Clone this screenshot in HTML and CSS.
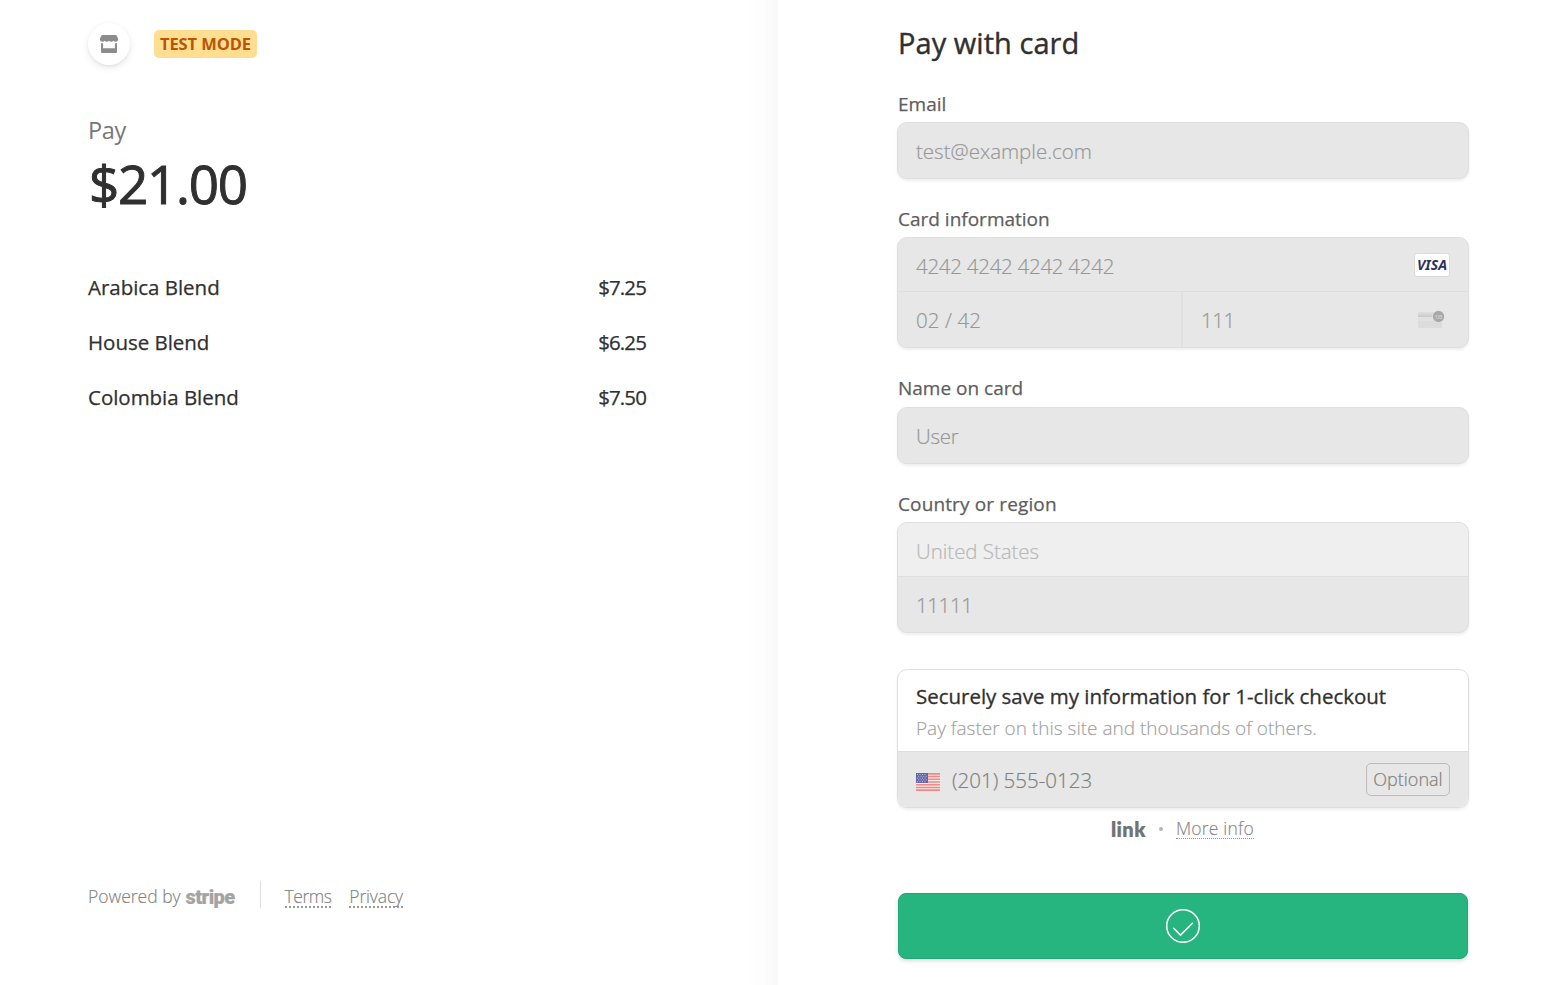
FILE: index.html
```html
<!DOCTYPE html>
<html lang="en">
<head>
<meta charset="utf-8">
<title>Checkout</title>
<link rel="stylesheet" href="styles.css">
</head>
<body>
<div class="checkout">
  <section class="summary">
    <header class="merchant">
      <div class="avatar">
        <svg width="18" height="18" viewBox="0 0 18 18"><path fill="#8c8c8c" d="M2.6 0h12.8c.7 0 1.2.3 1.5.9l.9 2c.2.5.2.8.2 1.3A2.4 2.4 0 0 1 15.500 6.800c-.9 0-1.700-.4-2.150-1.050A2.700 2.700 0 0 1 11.200 6.800 2.700 2.700 0 0 1 9 5.800 2.700 2.700 0 0 1 6.800 6.800a2.700 2.700 0 0 1-2.150-1.050A2.700 2.700 0 0 1 2.500 6.800 2.400 2.400 0 0 1 0 4.200c0-.5 0-.8.2-1.300l.9-2C1.400.3 1.900 0 2.600 0z"/><path fill="#8c8c8c" d="M1 8.200h2.100V13.200h11.800V8.200H17v8.300c0 1-.5 1.500-1.500 1.500h-13C1.500 18 1 17.500 1 16.500z"/></svg>
      </div>
      <span class="badge">TEST MODE</span>
    </header>
    <div class="pay">Pay</div>
    <div class="amount">$21.00</div>
    <ul class="items">
      <li><span>Arabica Blend</span><span class="price">$7.25</span></li>
      <li><span>House Blend</span><span class="price">$6.25</span></li>
      <li><span>Colombia Blend</span><span class="price">$7.50</span></li>
    </ul>
    <footer class="footer">
      <span class="powered">Powered by</span><span class="stripe">stripe</span>
      <span class="rule"></span>
      <a class="terms">Terms</a><a class="privacy">Privacy</a>
    </footer>
  </section>
  <main class="payment">
    <h1 class="title">Pay with card</h1>
    <label class="label l-email">Email</label>
    <div class="group"><div class="row">test@example.com</div></div>
    <label class="label">Card information</label>
    <div class="group digits">
      <div class="row upper"><span class="number">4242 4242 4242 4242</span>
        <svg class="visa" width="36" height="24" viewBox="0 0 36 24"><rect x=".5" y=".5" width="35" height="23" rx="2.500" fill="#fff" stroke="#d9d9d9"/><text x="3" y="17" textLength="30" lengthAdjust="spacingAndGlyphs">VISA</text></svg>
      </div>
      <div class="split">
        <div class="row date">02 / 42</div>
        <div class="row cvc">111
          <svg class="cvc-icon" width="27" height="19" viewBox="0 0 27 19"><defs><linearGradient id="stripeFade" x1="0" y1="0" x2="0" y2="1"><stop offset="0" stop-color="#dedede"/><stop offset="1" stop-color="#c8c8c8"/></linearGradient></defs><rect y="2" width="24" height="16" rx="1.500" fill="#dcdcdc"/><rect y="3" width="19" height="4" fill="url(#stripeFade)"/><rect y="7" width="20" height="4" fill="#e1e1e1"/><circle cx="20.500" cy="6.500" r="6.300" fill="#e7e7e7"/><circle cx="20.500" cy="6.500" r="5.700" fill="#a9a9a9"/><text x="16.700" y="8.800" textLength="7.600" lengthAdjust="spacingAndGlyphs">135</text></svg>
        </div>
      </div>
    </div>
    <label class="label">Name on card</label>
    <div class="group name-group"><div class="row user">User</div></div>
    <label class="label country">Country or region</label>
    <div class="group">
      <div class="row upper pale">United States</div>
      <div class="row zip">11111</div>
    </div>
    <div class="group save">
      <div class="save-copy">
        <div class="save-title">Securely save my information for 1-click checkout</div>
        <div class="save-sub">Pay faster on this site and thousands of others.</div>
      </div>
      <div class="row phone">
        <svg class="flag" width="24" height="18" viewBox="0 0 24 18"><rect width="24" height="18" rx="1" fill="#ededed"/><path stroke="#f18984" stroke-width="1.700" d="M0 .85h24M0 3.500h24M0 6.250h24M0 9h24M0 11.750h24M0 14.500h24M0 17.100h24"/><path fill="#6265a7" d="M0 0h12v10H0z"/><path stroke="#c5c6e0" stroke-width="1" stroke-dasharray="1 1.500" d="M1 1.500h10M2.200 3.300h9M1 5.100h10M2.200 6.900h9M1 8.700h10"/></svg>
        <span>(201) 555-0123</span>
        <span class="optional">Optional</span>
      </div>
    </div>
    <div class="link-row"><span class="link-logo">link</span><span class="dot"></span><a class="more">More info</a></div>
    <div class="submit">
      <svg width="36" height="36" viewBox="0 0 36 36" fill="none" stroke="#fff" stroke-width="1.500" stroke-linecap="round" stroke-linejoin="round"><circle cx="18" cy="18" r="16.300"/><path d="M8.700 20.300l6.800 6.800L27.500 15.200"/></svg>
    </div>
  </main>
</div>
</body>
</html>
```
FILE: styles.css
```css
* { box-sizing: border-box; }
body { margin: 0; background: #fff; font-family: "Open Sans", "Noto Sans", sans-serif; font-weight: 300; color: #303030; }
.checkout { display: grid; grid-template-columns: 778px 767px; height: 985px; overflow: hidden; }
.summary { display: flex; flex-direction: column; padding: 23px 132px 75px 88px; background: linear-gradient(to right, #fff 745px, #fdfdfd 763px, #f8f8f8 778px); }
.merchant { display: flex; align-items: center; gap: 24px; height: 42px; }
.avatar { display: flex; align-items: center; justify-content: center; width: 42px; height: 42px; border-radius: 50%; background: #fff; box-shadow: 0 3px 7px rgba(50, 50, 93, .1), 0 1px 3px rgba(0, 0, 0, .06); }
.badge { width: 103px; height: 28px; border-radius: 5px; background: #ffde92; color: #bb5504; font-size: 16.5px; font-weight: 700; line-height: 28px; text-align: center; letter-spacing: -.1px; white-space: nowrap; }
.pay { margin-top: 50px; height: 30px; line-height: 30px; font-size: 23.5px; font-weight: 400; color: #777; letter-spacing: -.3px; }
.amount { margin-top: 4px; height: 72px; line-height: 70px; font-size: 53px; font-weight: 400; letter-spacing: -1.3px; padding-left: 1px; -webkit-text-stroke: 1px #303030; }
.items { list-style: none; margin: 51px 0 0; padding: 0; display: flex; flex-direction: column; gap: 25px; }
.items li { display: flex; justify-content: space-between; height: 30px; line-height: 30px; font-size: 20.5px; font-weight: 400; letter-spacing: -.03px; -webkit-text-stroke: .25px #303030; }
.items .price { letter-spacing: -.9px; }
.footer { display: flex; align-items: center; margin-top: auto; height: 28px; line-height: 28px; font-size: 17.5px; color: #828282; -webkit-text-stroke: .15px; }
.stripe { margin-left: 5px; width: 50px; color: #a3a3a3; font: 900 20px/28px Roboto, sans-serif; letter-spacing: -.55px; padding-top: 1px; }
.rule { width: 1px; height: 27px; margin: -3px 24px 0; background: #dedede; }
.terms, .privacy, .more { line-height: 20px; border-bottom: 2px dotted #999; }
.terms, .privacy { margin-top: 2px; letter-spacing: -.15px; }
.terms { letter-spacing: -.5px; }
.privacy { margin-left: 18px; }
.payment { display: flex; flex-direction: column; width: 692px; padding: 26px 0 0 119px; }
.title { margin: 0; height: 36px; line-height: 33px; font-size: 29px; font-weight: 400; letter-spacing: .05px; padding-left: 1px; -webkit-text-stroke: .4px #303030; }
.label { height: 30px; margin-top: 25px; line-height: 30px; padding-left: 1px; font-size: 19px; font-weight: 400; color: #5e5e5e; -webkit-text-stroke: .25px #5e5e5e; }
.l-email { margin-top: 27px; }
.country { letter-spacing: .13px; }
.group { margin: 3px 1px 0 0; border: 1px solid #dfdfdf; border-radius: 10px; background: #e7e7e7; overflow: hidden; box-shadow: 0 2px 3px rgba(0, 0, 0, .07); color: #979797; font-size: 20.5px; }
.name-group { margin-top: 4px; }
.row { display: flex; align-items: center; height: 55px; padding: 0 18px; white-space: nowrap; -webkit-text-stroke: .2px; }
.row.upper { height: 54px; border-bottom: 1px solid #dedede; }
.number { letter-spacing: -.27px; padding-top: 2px; }
.split { display: grid; grid-template-columns: 283px 1fr; }
.date { letter-spacing: .1px; }
.cvc { border-left: 2px solid #e1e1e1; letter-spacing: -.5px; }
.user { letter-spacing: -.3px; }
.zip { letter-spacing: -.4px; }
.pale { background: #efefef; color: #b8b8b8; letter-spacing: -.05px; padding-top: 3px; }
.visa { margin-left: auto; -webkit-text-stroke: 0; }
.visa text { font: italic 700 13.5px "Noto Sans", sans-serif; fill: #2d3159; }
.cvc-icon { margin-left: auto; margin-right: 5px; -webkit-text-stroke: 0; }
.cvc-icon text { font: 700 6px "Open Sans", sans-serif; fill: #d0d0d0; letter-spacing: 0; }
.save { margin-top: 36px; height: 139px; background: #fff; }
.save-copy { height: 82px; padding: 11px 18px 0; border-bottom: 1px solid #dedede; }
.save-title { height: 31px; line-height: 31px; font-size: 20.5px; font-weight: 400; color: #303030; letter-spacing: -.02px; -webkit-text-stroke: .3px #303030; }
.save-sub { height: 32px; line-height: 32px; font-size: 19px; color: #a0a0a0; -webkit-text-stroke: .15px; }
.phone { background: #e7e7e7; color: #808080; }
.flag { margin: 4px 12px 0 0; }
.optional { margin-left: auto; width: 84px; height: 33px; border: 1px solid #bcbcbc; border-radius: 5px; line-height: 31px; text-align: center; font-size: 18px; }
.link-row { display: flex; align-items: center; height: 30px; margin: 6px 0 0 214px; font-size: 17.5px; color: #858585; letter-spacing: .2px; -webkit-text-stroke: .15px; }
.link-logo { width: 35px; color: #737373; font: 800 20px/30px Lato, sans-serif; letter-spacing: .4px; }
.dot { width: 4px; height: 4px; margin: 0 13px; border-radius: 50%; background: #b5b5b5; }
.more { border-bottom-width: 1px; margin-top: -2px; }
.submit { display: flex; align-items: center; justify-content: center; height: 66px; margin: 49px 2px 0 1px; border: 1px solid #22a77a; border-radius: 8px; background: #26b47f; box-shadow: 0 2px 4px rgba(0, 0, 0, .14); }
```
